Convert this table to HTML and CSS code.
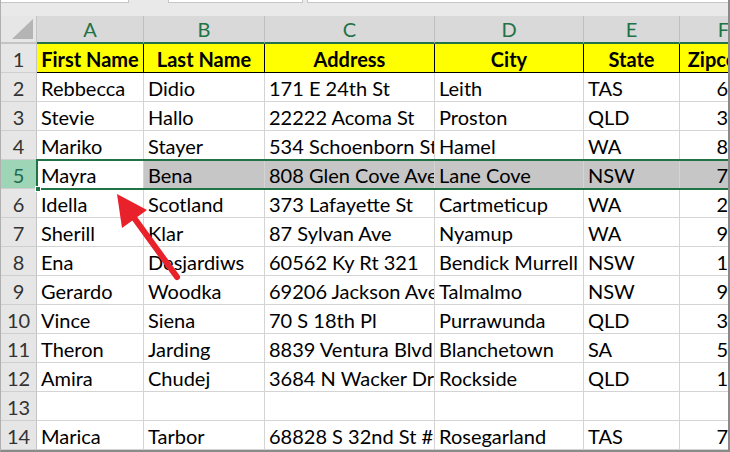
FILE: index.html
```html
<!DOCTYPE html>
<html>
<head>
<meta charset="utf-8">
<link rel="stylesheet" href="styles.css">
</head>
<body>
<div class="window">
  <div class="topbar">
    <div class="namebox"></div>
    <div class="fbar-a"></div>
    <div class="fbar-b"></div>
  </div>
  <div class="sheet">
    <div class="corner"><span class="tri"></span></div>
    <div class="colhead">A</div>
    <div class="colhead">B</div>
    <div class="colhead">C</div>
    <div class="colhead">D</div>
    <div class="colhead">E</div>
    <div class="colhead">F</div>

    <div class="rowhead">1</div>
    <div class="cell title">First Name</div>
    <div class="cell title">Last Name</div>
    <div class="cell title">Address</div>
    <div class="cell title">City</div>
    <div class="cell title">State</div>
    <div class="cell title">Zipcode</div>

    <div class="rowhead">2</div>
    <div class="cell">Rebbecca</div><div class="cell">Didio</div><div class="cell">171 E 24th St</div><div class="cell">Leith</div><div class="cell">TAS</div><div class="cell num">6472</div>

    <div class="rowhead">3</div>
    <div class="cell">Stevie</div><div class="cell">Hallo</div><div class="cell">22222 Acoma St</div><div class="cell">Proston</div><div class="cell">QLD</div><div class="cell num">3612</div>

    <div class="rowhead">4</div>
    <div class="cell">Mariko</div><div class="cell">Stayer</div><div class="cell">534 Schoenborn St</div><div class="cell">Hamel</div><div class="cell">WA</div><div class="cell num">8215</div>

    <div class="rowhead sel">5</div>
    <div class="cell">Mayra</div><div class="cell hl">Bena</div><div class="cell hl">808 Glen Cove Ave</div><div class="cell hl">Lane Cove</div><div class="cell hl">NSW</div><div class="cell hl num">7066</div>

    <div class="rowhead">6</div>
    <div class="cell">Idella</div><div class="cell">Scotland</div><div class="cell">373 Lafayette St</div><div class="cell">Cartmeticup</div><div class="cell">WA</div><div class="cell num">2315</div>

    <div class="rowhead">7</div>
    <div class="cell">Sherill</div><div class="cell">Klar</div><div class="cell">87 Sylvan Ave</div><div class="cell">Nyamup</div><div class="cell">WA</div><div class="cell num">9260</div>

    <div class="rowhead">8</div>
    <div class="cell">Ena</div><div class="cell">Desjardiws</div><div class="cell">60562 Ky Rt 321</div><div class="cell">Bendick Murrell</div><div class="cell">NSW</div><div class="cell num">1594</div>

    <div class="rowhead">9</div>
    <div class="cell">Gerardo</div><div class="cell">Woodka</div><div class="cell">69206 Jackson Ave</div><div class="cell">Talmalmo</div><div class="cell">NSW</div><div class="cell num">9640</div>

    <div class="rowhead">10</div>
    <div class="cell">Vince</div><div class="cell">Siena</div><div class="cell">70 S 18th Pl</div><div class="cell">Purrawunda</div><div class="cell">QLD</div><div class="cell num">3356</div>

    <div class="rowhead">11</div>
    <div class="cell">Theron</div><div class="cell">Jarding</div><div class="cell">8839 Ventura Blvd</div><div class="cell">Blanchetown</div><div class="cell">SA</div><div class="cell num">5357</div>

    <div class="rowhead">12</div>
    <div class="cell">Amira</div><div class="cell">Chudej</div><div class="cell">3684 N Wacker Dr</div><div class="cell">Rockside</div><div class="cell">QLD</div><div class="cell num">1343</div>

    <div class="rowhead">13</div>
    <div class="cell"></div><div class="cell"></div><div class="cell"></div><div class="cell"></div><div class="cell"></div><div class="cell"></div>

    <div class="rowhead">14</div>
    <div class="cell">Marica</div><div class="cell">Tarbor</div><div class="cell">68828 S 32nd St #6</div><div class="cell">Rosegarland</div><div class="cell">TAS</div><div class="cell num">7140</div>
  </div>

  <div class="selection"><span class="handle"></span></div>

  <svg class="arrow" width="730" height="452" viewBox="0 0 730 452">
    <line x1="176" y1="277" x2="131" y2="215" stroke="#e8212b" stroke-width="6" stroke-linecap="round"/>
    <polygon points="116,194 146,210 121,228" fill="#e8212b"/>
  </svg>
</div>
</body>
</html>
```
FILE: styles.css
```css
* { box-sizing: border-box; }
html, body { margin: 0; padding: 0; background: #fff; }
.window {
  position: relative;
  width: 730px;
  height: 452px;
  overflow: hidden;
  font-family: "Lato", "Open Sans", sans-serif;
  border-right: 2px solid #8a8a8a;
  border-bottom: 2px solid #8a8a8a;
  border-left: 1px solid #b0b0b0;
  background: #fff;
}
.topbar {
  display: flex;
  height: 16px;
  background: #e9e9e9;
}
.namebox {
  width: 128px;
  height: 3px;
  background: #fff;
  border-right: 1px solid #c6c6c6;
  border-bottom: 1px solid #c6c6c6;
}
.fbar-a {
  margin-left: 39px;
  width: 135px;
  height: 3px;
  background: #fff;
  border-left: 1px solid #c6c6c6;
  border-right: 1px solid #c6c6c6;
  border-bottom: 1px solid #c6c6c6;
}
.fbar-b {
  margin-left: 4px;
  flex: 1;
  height: 3px;
  background: #fff;
  border-left: 1px solid #c6c6c6;
  border-bottom: 1px solid #c6c6c6;
}
.sheet {
  display: grid;
  grid-template-columns: 36px 107px 121px 170px 149px 96px 88px;
  grid-template-rows: 28px repeat(14, 29px);
  width: 800px;
}
.corner {
  position: relative;
  background: #e6e6e6;
  border-right: 1px solid #c4c4c4;
  border-bottom: 2px solid #c4c4c4;
}
.tri {
  position: absolute;
  right: 3px;
  bottom: 3px;
  width: 0;
  height: 0;
  border-left: 21px solid transparent;
  border-bottom: 20px solid #b4b4b4;
}
.colhead {
  background: #d9d9d9;
  border-right: 1px solid #bfbfbf;
  border-bottom: 2px solid #217346;
  color: #217346;
  font-size: 20px;
  line-height: 26px;
  text-align: center;
}
.rowhead {
  background: #e6e6e6;
  border-right: 1px solid #c4c4c4;
  border-bottom: 1px solid #cfcfcf;
  color: #333;
  font-size: 20px;
  line-height: 28px;
  padding-top: 1px;
  text-align: center;
}
.rowhead.sel {
  background: #9fd5b7;
  color: #1f6b4f;
}
.cell {
  border-right: 1px solid #d4d4d4;
  border-bottom: 1px solid #d4d4d4;
  font-size: 20px;
  line-height: 28px;
  padding: 1px 4px 0 4px;
  color: #000;
  white-space: nowrap;
  overflow: hidden;
}
.cell.title {
  background: #ffff00;
  font-weight: bold;
  text-align: center;
  border-right: 1px solid #000;
  border-bottom: 1px solid #000;
  padding: 1px 0 0 0;
}
.cell.hl { background: #c6c6c6; }
.cell.num { text-align: right; padding-right: 4px; }
.selection {
  position: absolute;
  left: 35px;
  top: 159px;
  width: 720px;
  height: 31px;
  border: 2px solid #217346;
  pointer-events: none;
}
.handle {
  position: absolute;
  left: -3px;
  bottom: -4px;
  width: 6px;
  height: 6px;
  background: #217346;
  border: 1px solid #fff;
}
.arrow {
  position: absolute;
  left: 0;
  top: 0;
}
```
